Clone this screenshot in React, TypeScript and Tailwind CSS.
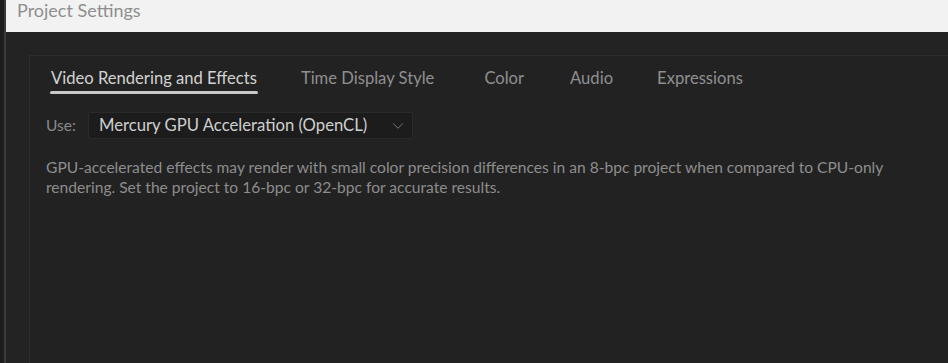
import { ChevronDown } from 'lucide-react';

const tabs = [
  { label: 'Video Rendering and Effects', ml: 'ml-0' },
  { label: 'Time Display Style', ml: 'ml-[44px]' },
  { label: 'Color', ml: 'ml-[50px]' },
  { label: 'Audio', ml: 'ml-[46px]' },
  { label: 'Expressions', ml: 'ml-[44px]' },
];

export default function App() {
  return (
    <div className="flex h-[363px] w-[948px] overflow-hidden bg-[#232323]" style={{ fontFamily: 'Lato, "Noto Sans", sans-serif' }}>
      {/* edge of the window behind */}
      <div className="h-full w-1 bg-[#1d1d1d]" />
      <div className="h-full w-[2px] bg-[#3a3a3a]" />

      <div className="flex flex-1 flex-col">
        <div className="h-8 bg-[#f2f2f2] pl-[11px] text-[18px] leading-5 text-[#8e8e8e]">Project Settings</div>

        <div className="flex-1 pl-[23px] pt-[23px]">
          <div className="h-full border-l border-t border-[#2d2d2d] bg-[#222222] pl-[16px]">
            <div className="flex pl-[5px] pt-[10px]">
              {tabs.map((t, i) => (
                <div key={t.label} className={`flex flex-col ${t.ml}`}>
                  <span className={`text-[16.6px] leading-6 ${i === 0 ? 'text-[#d2d2d2]' : 'text-[#8f8f8f]'}`}>{t.label}</span>
                  <div className={`-mx-[1px] mt-[1px] h-[3px] rounded-full ${i === 0 ? 'bg-[#c9c9c9]' : ''}`} />
                </div>
              ))}
            </div>

            <div className="mt-[18px] flex items-center">
              <span className="w-[42px] text-[15.5px] text-[#8b8b8b]">Use:</span>
              <div className="flex h-[27px] w-[325px] items-center justify-between rounded-[2px] border border-[#2a2a2a] bg-[#1c1c1c] pl-[10px] pr-[5px]">
                <span className="text-[16.7px] text-[#cfcfcf]">Mercury GPU Acceleration (OpenCL)</span>
                <ChevronDown size={18} strokeWidth={1.1} className="text-[#8a8a8a]" />
              </div>
            </div>

            <p className="mt-[18px] w-[880px] text-[15.6px] leading-5 text-[#8d8d8d]">
              GPU-accelerated effects may render with small color precision differences in an 8-bpc project when compared to CPU-only rendering. Set the project to 16-bpc or 32-bpc for accurate results.
            </p>
          </div>
        </div>
      </div>
    </div>
  );
}
